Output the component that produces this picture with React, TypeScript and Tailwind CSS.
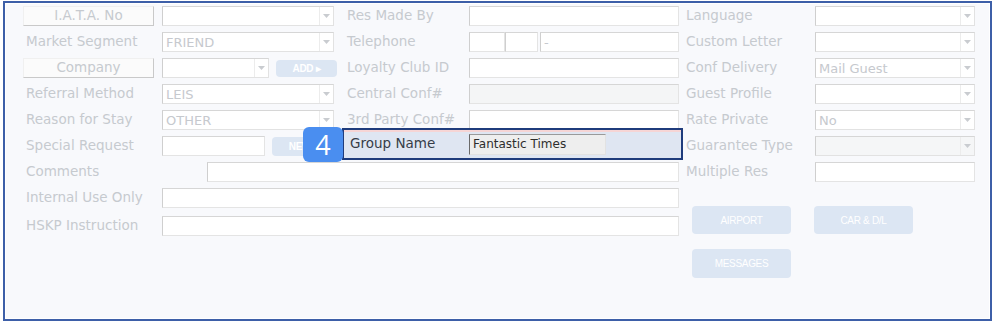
import type { ReactNode } from "react";

function Arrow() {
  return (
    <span className="flex h-full w-[14px] items-center justify-center border-l border-[#ececec]">
      <svg width="7" height="4" viewBox="0 0 7 4">
        <path d="M0 0h7L3.5 4z" fill="#c9ccd0" />
      </svg>
    </span>
  );
}

function Label({ children, w }: { children: ReactNode; w: string }) {
  return (
    <span className={`${w} block shrink-0 whitespace-nowrap text-[13.5px] leading-none text-[#c6cacf]`}>
      {children}
    </span>
  );
}

function Select({ value, w, disabled }: { value?: string; w: string; disabled?: boolean }) {
  return (
    <div
      className={`${w} flex h-[20px] items-center justify-between border border-[#e2e2e2] border-l-[#cfcfcf] border-t-[#d6d6d6] ${
        disabled ? "bg-[#f5f6f7]" : "bg-white"
      }`}
    >
      <span className="pl-[3px] text-[13px] leading-none text-[#c6c9ce]">{value}</span>
      <Arrow />
    </div>
  );
}

function TextBox({ w, value, grey }: { w: string; value?: string; grey?: boolean }) {
  return (
    <div
      className={`${w} flex h-[20px] shrink-0 items-center border border-[#e4e4e4] border-l-[#cfcfcf] border-t-[#d6d6d6] ${
        grey ? "bg-[#f4f5f6]" : "bg-white"
      }`}
    >
      <span className="pl-[3px] text-[13px] leading-none text-[#c6c9ce]">{value}</span>
    </div>
  );
}

function OldButton({ children }: { children: ReactNode }) {
  return (
    <div className="flex h-[20px] w-[131px] shrink-0 items-center justify-center border border-[#f0f0f0] border-b-[#c9c9c9] border-r-[#c9c9c9] bg-[#fbfbfb] text-[13.5px] leading-none text-[#c6cacf]">
      {children}
    </div>
  );
}

function Pill({ children, w, h, bold }: { children: ReactNode; w: string; h: string; bold?: boolean }) {
  return (
    <div
      className={`${w} ${h} flex shrink-0 items-center justify-center rounded-[4px] bg-[#dce6f3] font-['Liberation_Sans',sans-serif] text-[10px] tracking-[-0.3px] text-white ${
        bold ? "font-bold" : ""
      }`}
    >
      {children}
    </div>
  );
}

const row = "flex h-[26px] items-center";

export default function App() {
  return (
    <div className="h-[325px] w-[995px] bg-white pl-[3px] pt-[1px] font-['DejaVu_Sans',Verdana,sans-serif]">
      <div className="h-[320px] w-[989px] border-2 border-[#3d5fa8] p-[1px]">
        <div className="flex h-full bg-[#f8f9fc] pl-[17px]">
          {/* left + middle */}
          <div className="-mt-[1px] flex w-[660px] flex-col">
            <div className="flex">
              <div className="flex w-[318px] flex-col">
                <div className={row}>
                  <OldButton>I.A.T.A. No</OldButton>
                  <div className="ml-[8px]">
                    <Select w="w-[172px]" />
                  </div>
                </div>
                <div className={`${row} pl-[3px]`}>
                  <Label w="w-[136px]">Market Segment</Label>
                  <Select w="w-[172px]" value="FRIEND" />
                </div>
                <div className={row}>
                  <OldButton>Company</OldButton>
                  <div className="ml-[8px]">
                    <Select w="w-[107px]" />
                  </div>
                  <div className="ml-[7px]">
                    <Pill w="w-[61px]" h="h-[17px]" bold>
                      ADD ▸
                    </Pill>
                  </div>
                </div>
                <div className={`${row} pl-[3px]`}>
                  <Label w="w-[136px]">Referral Method</Label>
                  <Select w="w-[172px]" value="LEIS" />
                </div>
                <div className={`${row} pl-[3px]`}>
                  <Label w="w-[136px]">Reason for Stay</Label>
                  <Select w="w-[172px]" value="OTHER" />
                </div>
                <div className={`${row} pl-[3px]`}>
                  <Label w="w-[136px]">Special Request</Label>
                  <TextBox w="w-[103px]" />
                  <div className="ml-[7px]">
                    <Pill w="w-[56px]" h="h-[19px]" bold>
                      NEW
                    </Pill>
                  </div>
                </div>
              </div>

              <div className="flex w-[340px] flex-col">
                <div className={`${row} pl-[6px]`}>
                  <Label w="w-[122px]">Res Made By</Label>
                  <TextBox w="w-[210px]" />
                </div>
                <div className={`${row} pl-[6px]`}>
                  <Label w="w-[122px]">Telephone</Label>
                  <TextBox w="w-[36px]" />
                  <TextBox w="w-[33px]" />
                  <div className="ml-[2px]">
                    <TextBox w="w-[139px]" value="-" />
                  </div>
                </div>
                <div className={`${row} pl-[6px]`}>
                  <Label w="w-[122px]">Loyalty Club ID</Label>
                  <TextBox w="w-[210px]" />
                </div>
                <div className={`${row} pl-[6px]`}>
                  <Label w="w-[122px]">Central Conf#</Label>
                  <TextBox w="w-[210px]" grey />
                </div>
                <div className={`${row} pl-[6px]`}>
                  <Label w="w-[122px]">3rd Party Conf#</Label>
                  <TextBox w="w-[210px]" />
                </div>
                <div className="relative h-[26px]">
                  {/* highlighted callout */}
                  <div className="absolute left-[1px] top-[-5px] flex h-[32px] w-[341px] items-center border-2 border-[#1f3c7c] bg-[#dfe6f2] shadow-[inset_0_2px_0_#f6d5d5]">
                    <span className="w-[125px] pl-[6px] text-[13.5px] leading-none text-[#363d48]">
                      Group Name
                    </span>
                    <div className="flex h-[21px] w-[137px] items-center border border-[#e2e2e2] border-l-[#6a6a6a] border-t-[#9a9a9a] bg-[#eeeeee]">
                      <span className="pl-[3px] text-[12px] leading-none text-[#2d2d2d]">
                        Fantastic Times
                      </span>
                    </div>
                  </div>
                  <div className="absolute left-[-38px] top-[-6px] flex h-[35px] w-[40px] items-center justify-center rounded-[6px] bg-[#4a8ef0] font-['Open_Sans',sans-serif] text-[27px] leading-none text-white">
                    4
                  </div>
                </div>
              </div>
            </div>

            <div className={`${row} pl-[3px]`}>
              <Label w="w-[181px]">Comments</Label>
              <TextBox w="w-[472px]" />
            </div>
            <div className={`${row} pl-[3px]`}>
              <Label w="w-[136px]">Internal Use Only</Label>
              <TextBox w="w-[517px]" />
            </div>
            <div className={`${row} h-[29px] pl-[3px]`}>
              <Label w="w-[136px]">HSKP Instruction</Label>
              <TextBox w="w-[517px]" />
            </div>
          </div>

          {/* right */}
          <div className="-mt-[1px] ml-[3px] flex flex-col">
            <div className={row}>
              <Label w="w-[129px]">Language</Label>
              <Select w="w-[160px]" />
            </div>
            <div className={row}>
              <Label w="w-[129px]">Custom Letter</Label>
              <Select w="w-[160px]" />
            </div>
            <div className={row}>
              <Label w="w-[129px]">Conf Delivery</Label>
              <Select w="w-[160px]" value="Mail Guest" />
            </div>
            <div className={row}>
              <Label w="w-[129px]">Guest Profile</Label>
              <Select w="w-[160px]" />
            </div>
            <div className={row}>
              <Label w="w-[129px]">Rate Private</Label>
              <Select w="w-[160px]" value="No" />
            </div>
            <div className={row}>
              <Label w="w-[129px]">Guarantee Type</Label>
              <Select w="w-[160px]" disabled />
            </div>
            <div className={row}>
              <Label w="w-[129px]">Multiple Res</Label>
              <TextBox w="w-[160px]" />
            </div>
            <div className="ml-[6px] mt-[21px] grid w-[221px] grid-cols-[99px_99px] gap-x-[23px] gap-y-[15px]">
              <Pill w="w-[99px]" h="h-[28px]">AIRPORT</Pill>
              <Pill w="w-[99px]" h="h-[28px]">CAR &amp; D/L</Pill>
              <Pill w="w-[99px]" h="h-[29px]">MESSAGES</Pill>
            </div>
          </div>
        </div>
      </div>
    </div>
  );
}
